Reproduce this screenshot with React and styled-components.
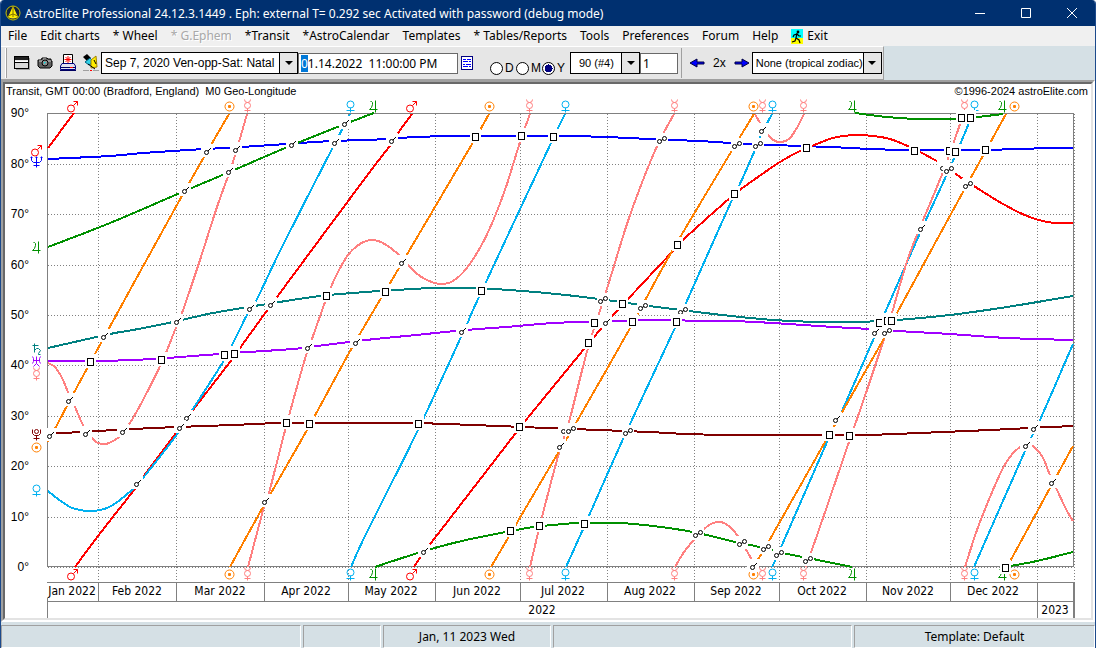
import React, { useEffect, useRef, useState } from 'react'
import styled, { createGlobalStyle, css } from 'styled-components'

const palette = {
  title: '#003070',
  frame: '#1c4a8c',
  menu: '#f0f0f0',
  toolbar: '#e6e6e6',
  panel: '#d5e0e5',
  grid: '#808080',
}

const planets = {
  mars: '#ff0000',
  neptune: '#0000ff',
  jupiter: '#009000',
  saturn: '#008080',
  uranus: '#a000ff',
  pluto: '#800000',
  sun: '#ff8000',
  mercury: '#ff8080',
  venus: '#00b0f0',
}

const uiFont = '"Noto Sans", "Open Sans", sans-serif'
const chartFont = '"DejaVu Sans Condensed", "Noto Sans", sans-serif'
const arial = '"Liberation Sans", Arial, sans-serif'

// every entry is one visible segment of a planet, as x,y pairs
const curves = [
  ['pluto', '48,434 80,432 133,429 177,427 233,425 283,423 366,423 413,423 446,424 499,426 546,428 599,430 649,432 686,434 731,435 823,435 867,435 943,432 990,430 1030,428 1073,426'],
  ['neptune', '48,159 110,156 143,153 187,150 242,147 300,143 333,141 366,140 386,139 416,137 456,136 499,136 566,136 606,137 649,139 699,141 731,143 773,145 830,147 870,149 907,150 977,150 1020,149 1050,148 1073,148'],
  ['uranus', '48,361 100,361 153,359 193,356 233,353 293,349 317,346 366,340 416,335 466,330 506,327 553,323 586,322 619,321 666,320 699,321 731,321 773,323 833,327 870,329 897,331 950,334 1007,338 1073,340'],
  ['saturn', '48,348 110,334 133,330 173,322 213,313 267,304 320,296 366,292 396,290 433,288 473,288 523,291 566,295 606,300 649,306 689,311 731,316 773,320 817,322 857,322 897,320 950,315 1007,307 1073,296'],
  ['jupiter', '48,247 110,223 180,193 227,173 290,146 340,126 366,116 374,113'],
  ['jupiter', '375,567 399,559 431,549 466,540 506,532 533,527 553,525 579,523 619,523 653,526 693,532 731,541 755,546 783,553 813,559 852,567'],
  ['jupiter', '855,113 887,117 917,119 950,119 977,117 1003,114'],
  ['jupiter', '1005,567 1037,561 1073,552'],
  ['mars', '48,148 74,113'],
  ['mars', '75,567 98,536 134,490 143,477 176,433 193,410 230,362 240,348 277,297 366,177 389,147 398,133 412,114'],
  ['mars', '414,567 423,553 431,543 515,434 526,420 584,349 594,337 605,324 628,299 673,251 684,239 731,197 741,189 780,162 802,150 812,146 833,138 855,135 873,136 890,139 910,147 920,152 940,163 960,177 977,188 1003,204 1027,216 1047,222 1063,223 1073,223'],
  ['venus', '48,491 58,499 70,507 80,510 88,511 100,510 113,505 133,489 143,478 178,433 193,409 223,362 235,339 248,313 257,299 283,245 333,147 350,114'],
  ['venus', '351,567 366,534 418,430 461,337 468,322 479,297 551,143 565,114'],
  ['venus', '566,567 584,527 624,437 674,330 686,303 731,202 739,186 755,150 761,135 772,114'],
  ['venus', '772,567 782,545 827,442 842,411 874,338 884,315 920,233 952,163 969,123 973,113'],
  ['venus', '974,567 1025,451 1040,420 1073,344'],
  ['mercury', '48,363 55,367 62,378 68,392 75,407 83,425 92,438 98,443 106,444 113,441 120,436 130,423 143,400 162,362 175,330 182,313 200,260 217,207 233,162 247,114'],
  ['mercury', '248,567 264,507 269,493 287,423 307,352 312,339 325,302 331,287 338,272 348,255 357,246 366,241 374,240 383,243 398,254 416,273 429,281 441,284 453,281 466,269 481,246 493,221 506,187 520,142 530,114'],
  ['mercury', '530,567 542,517 559,453 569,422 588,348 606,292 626,227 643,180 659,142 674,114'],
  ['mercury', '675,567 684,552 693,541 703,530 711,524 719,522 726,524 732,529 737,535 745,548 752,560 755,567'],
  ['mercury', '755,114 760,123 768,135 775,141 782,142 790,138 798,126 804,114'],
  ['mercury', '806,567 823,518 849,442 867,390 883,342 892,313 910,253 943,172 960,124 963,113'],
  ['mercury', '965,567 977,530 990,497 1003,468 1013,453 1022,446 1027,444 1033,446 1042,456 1050,475 1057,490 1067,511 1073,521'],
  ['sun', '48,442 90,363 183,194 229,114'],
  ['sun', '230,567 263,507 307,430 353,346 399,268 472,144 489,114'],
  ['sun', '491,567 558,453 576,423 629,330 671,253 731,152 754,114'],
  ['sun', '753,567 769,541 825,442 882,342 897,313 963,192 1006,114'],
  ['sun', '1007,567 1050,488 1073,446'],
]

const conjunctions = [
  [206, 152], [235, 150], [228, 172], [184, 191], [291, 145], [344, 124], [334, 143], [103, 337],
  [176, 322], [249, 309], [270, 305], [68, 401], [49, 436], [85, 434], [122, 432], [186, 418],
  [179, 428], [136, 484], [264, 502], [307, 348], [355, 343], [391, 141], [401, 263], [461, 332],
  [423, 552], [605, 323], [559, 447], [761, 131], [920, 229], [835, 420], [1033, 429], [1025, 446],
  [1051, 483], [752, 567], [874, 333], [942, 168], [563, 431],
]

const oppositions = [
  [659, 141], [600, 301], [640, 308], [680, 312], [568, 431], [625, 433], [695, 535], [734, 146],
  [755, 146], [946, 171], [965, 186], [884, 333], [739, 544], [763, 549], [776, 555], [805, 561],
]

const squares = [
  [90, 362], [161, 360], [224, 355], [234, 354], [326, 296], [286, 423], [309, 424], [385, 292],
  [418, 424], [481, 291], [475, 137], [521, 136], [553, 137], [519, 427], [588, 343], [594, 323],
  [632, 322], [676, 322], [677, 245], [622, 304], [510, 531], [539, 526], [584, 524], [734, 194],
  [806, 148], [914, 151], [949, 151], [955, 152], [985, 150], [961, 118], [970, 118], [879, 323],
  [887, 321], [891, 321], [827, 435], [829, 435], [849, 436], [1005, 568],
]

const edgeGlyphs = [
  ['mars', 72], ['sun', 229], ['mercury', 247], ['venus', 350], ['jupiter', 373], ['mars', 411],
  ['sun', 489], ['mercury', 529], ['venus', 565], ['mercury', 674], ['sun', 753], ['mercury', 762],
  ['venus', 772], ['mercury', 803], ['jupiter', 852], ['mercury', 964], ['venus', 974],
  ['jupiter', 1002], ['sun', 1014],
]

const sideGlyphs = [
  ['mars', 150], ['neptune', 161], ['jupiter', 247], ['saturn', 349], ['uranus', 361],
  ['mercury', 373], ['pluto', 434], ['sun', 447], ['venus', 490],
]

const glyphPaths = {
  mars: 'M-5 2a3.5 3.5 0 1 0 7 0a3.5 3.5 0 1 0 -7 0M1 -1L5 -5M1 -5H5V-1',
  sun: 'M-4.5 0a4.5 4.5 0 1 0 9 0a4.5 4.5 0 1 0 -9 0M-1 -1H1V1H-1ZM-1 0H1',
  mercury: 'M-3 -6Q-3 -3 0 -3Q3 -3 3 -6M-3 0a3 3 0 1 0 6 0a3 3 0 1 0 -6 0M0 3V7M-3 5H3',
  venus: 'M-3.5 -2a3.5 3.5 0 1 0 7 0a3.5 3.5 0 1 0 -7 0M0 1V6M-4 4H4',
  jupiter: 'M-3 -5H-2L-1 -4V-2L-2 1L-4 3H4M2 -6V6',
  neptune: 'M-5 -5V-1L-3 1H3L5 -1V-5M0 -5V6M-3 4H3M-6 -4H-4M-1 -4H1M4 -4H6',
  saturn: 'M-4 -4H2M-2 -6V3M-2 1L0 -1H2L4 1L2 4V5H4',
  uranus: 'M-4 -5L-3 -3V0L-4 2M4 -5L3 -3V0L4 2M-3 -1H3M0 -5V2M-3 5L0 2L3 5',
  pluto: 'M-4 -5V-1L-2 1H2L4 -1V-5M-2 -3a2 2 0 1 0 4 0a2 2 0 1 0 -4 0M0 1V6M-3 4H3',
}

const months = [
  ['Jan 2022', 72], ['Feb 2022', 137], ['Mar 2022', 220], ['Apr 2022', 306], ['May 2022', 391],
  ['Jun 2022', 477], ['Jul 2022', 563], ['Aug 2022', 650], ['Sep 2022', 736], ['Oct 2022', 822],
  ['Nov 2022', 908], ['Dec 2022', 993],
]

const monthLines = [98, 176, 264, 348, 435, 520, 607, 694, 779, 866, 950, 1037]
const degrees = [90, 80, 70, 60, 50, 40, 30, 20, 10, 0]

const degreeY = deg => Math.round(567 - deg * 5.04)

// Catmull-Rom through all the points, written as cubic beziers
const toPath = text => {
  const p = text.split(' ').map(pair => pair.split(',').map(Number))
  let d = `M${p[0]}`
  for (let i = 0; i < p.length - 1; i++) {
    const a = p[i - 1] || p[i]
    const b = p[i]
    const c = p[i + 1]
    const e = p[i + 2] || c
    d += `C${b[0] + (c[0] - a[0]) / 6},${b[1] + (c[1] - a[1]) / 6} ${c[0] - (e[0] - b[0]) / 6},${c[1] - (e[1] - b[1]) / 6} ${c}`
  }
  return d
}

const GlobalStyle = createGlobalStyle`
  * {
    box-sizing: border-box;
  }

  body {
    margin: 0;
    background: #fff;
    color: #000;
    font-family: ${uiFont};
    font-size: 12px;
  }

  button, input, select {
    font: inherit;
    color: inherit;
    margin: 0;
    padding: 0;
    border: 0;
    border-radius: 0;
    background: none;
  }
`

const Window = styled.div`
  display: flex;
  flex-direction: column;
  min-height: 100vh;
  border: 1px solid ${palette.frame};
  border-top: 0;
  border-radius: 4px 4px 0 0;
  overflow: hidden;
`

const TitleBar = styled.header`
  display: flex;
  align-items: center;
  height: 26px;
  padding-left: 4px;
  gap: 4px;
  background: ${palette.title};
  color: #fff;
`

const Title = styled.h1`
  flex: 1;
  margin: 0;
  font-size: 12px;
  font-weight: normal;
  white-space: nowrap;
`

const WindowButtons = styled.div`
  display: flex;
`

const WindowButton = styled.button`
  display: flex;
  align-items: center;
  justify-content: center;
  width: 46px;
  height: 26px;
`

const MenuBar = styled.nav`
  display: flex;
  align-items: center;
  height: 20px;
  padding-left: 7px;
  gap: 13px;
  background: ${palette.menu};
`

const MenuItem = styled.button`
  display: flex;
  align-items: center;
  gap: 4px;
  line-height: 20px;
  white-space: nowrap;

  ${({ disabled }) => disabled && css`
    color: #a8a8a8;
    text-shadow: 1px 1px #fff;
  `}
`

const ToolbarRow = styled.div`
  display: flex;
  height: 34px;
  background: ${palette.panel};
`

const Toolbar = styled.div`
  display: flex;
  align-items: center;
  height: 34px;
  border-top: 1px solid #fff;
  border-right: 1px solid #a0a0a0;
  border-bottom: 1px solid #a0a0a0;
  padding-right: 1px;
  background: ${palette.toolbar};
`

const Grip = styled.span`
  width: 2px;
  height: 30px;
  margin: 0 6px 0 4px;
  border-left: 1px solid #fff;
  border-right: 1px solid #a0a0a0;
`

const IconGroup = styled.div`
  display: flex;
  align-items: center;
  gap: 5px;
  margin-right: 1px;
`

const IconButton = styled.button`
  display: flex;
  align-items: center;
  justify-content: center;
  width: 18px;
  height: 22px;
`

const Combo = styled.label`
  display: flex;
  width: ${({ $width }) => $width}px;
  height: 22px;
  border: 1px solid #000;
  background: #fff;

  select {
    flex: 1;
    min-width: 0;
    padding-left: ${({ $indent }) => $indent}px;
    appearance: none;
    font-family: ${arial};
    font-size: ${({ $size }) => $size}px;
  }

  select:focus {
    outline: none;
  }
`

const ComboArrow = styled.span`
  display: flex;
  align-items: center;
  justify-content: center;
  width: 18px;
  border-left: 1px solid #000;
  background: ${palette.toolbar};

  &::before {
    content: '';
    border: 4px solid transparent;
    border-top-color: #000;
    border-bottom-width: 0;
  }
`

const TextBox = styled.input`
  width: ${({ $width }) => $width}px;
  height: 21px;
  padding-left: 2px;
  border: 1px solid #696969;
  background: #fff;
  caret-color: #ff8000;

  &:focus {
    outline: none;
  }

  &::selection {
    background: #0078d7;
    color: #fff;
  }
`

const Radios = styled.div`
  display: flex;
  align-self: flex-end;
  height: 22px;
  margin: 0 5px 0 14px;
  font-family: ${arial};
`

const Radio = styled.label`
  display: flex;
  align-items: center;
  width: 26px;
  gap: 2px;

  &:last-child {
    width: 23px;
  }

  input {
    flex: none;
    width: 13px;
    height: 13px;
    border: 1px solid #000;
    border-radius: 50%;
    appearance: none;
    background: #fff;
  }

  input:checked {
    background: radial-gradient(circle, #000080 4px, #fff 4px);
  }
`

const StepGroup = styled.div`
  display: flex;
  align-items: center;
  height: 30px;
  margin-left: 3px;
  padding: 0 1px 0 6px;
  gap: 7px;
  border-left: 1px solid #a0a0a0;
  font-family: ${arial};
`

const ChartFrame = styled.main`
  flex: 1;
  border: 2px solid;
  border-color: #a0a0a0 #fff #fff #a0a0a0;
`

const ChartPanel = styled.section`
  height: 100%;
  border: 2px solid;
  border-color: #696969 #e3e3e3 #e3e3e3 #696969;
  background: #fff;
`

const ChartHeader = styled.div`
  display: flex;
  justify-content: space-between;
  height: 14px;
  padding: 0 3px 0 1px;
  font-family: ${arial};
  font-size: 11px;
  line-height: 14px;
  white-space: pre;
`

const ChartSvg = styled.svg`
  display: block;
  width: 100%;
  height: auto;
  font-family: ${chartFont};
  font-size: 12px;
`

const StatusBar = styled.footer`
  display: grid;
  grid-template-columns: 300fr 78fr 168fr 299fr 241fr;
  gap: 2px;
  height: 26px;
  padding: 3px 0 1px;
  background: ${palette.panel};
`

const StatusCell = styled.div`
  border: 1px solid;
  border-color: #a0a0a0 #fff #fff #a0a0a0;
  line-height: 21px;
  text-align: center;
`

const Combobox = ({ label, value, width, size = 11, indent = 3 }) => (
  <Combo $width={width} $size={size} $indent={indent}>
    <select aria-label={label} defaultValue={value}>
      <option>{value}</option>
    </select>
    <ComboArrow />
  </Combo>
)

const Glyph = ({ name, x, y }) => (
  <path
    d={glyphPaths[name]}
    transform={`translate(${x + 0.5} ${y + 0.5})`}
    fill='none'
    stroke={planets[name]}
  />
)

const Conjunction = ({ x, y }) => (
  <g>
    <rect x={x - 5} y={y - 8} width='12' height='13' fill='#fff' />
    <circle cx={x + 0.5} cy={y + 0.5} r='2' fill='none' stroke='#000' />
    <path d={`M${x + 2} ${y - 1}L${x + 5} ${y - 4}`} stroke='#000' />
  </g>
)

const Opposition = ({ x, y }) => (
  <g>
    <rect x={x - 3} y={y - 8} width='12' height='13' fill='#fff' />
    <g fill='none' stroke='#000'>
      <circle cx={x + 0.5} cy={y + 0.5} r='2' />
      <circle cx={x + 5.5} cy={y - 2.5} r='2' />
      <path d={`M${x + 2} ${y - 0.5}L${x + 4} ${y - 1.5}`} />
    </g>
  </g>
)

const Square = ({ x, y }) => (
  <g>
    <rect x={x - 5} y={y - 8} width='11' height='14' fill='#fff' />
    <rect x={x - 2.5} y={y - 3.5} width='6' height='7' fill='#fff' stroke='#000' shapeRendering='crispEdges' />
  </g>
)

const Chart = () => (
  <ChartSvg viewBox='5 98 1086 520' role='img' aria-label='Transit graph'>
    <g stroke={palette.grid} strokeDasharray='1 2' shapeRendering='crispEdges'>
      {degrees.slice(1).map(deg => (
        <path key={deg} d={`M48 ${degreeY(deg) + 0.5}H1073`} />
      ))}
      {monthLines.map(x => (
        <path key={x} d={`M${x + 0.5} 114V582`} />
      ))}
      <path d='M1074.5 114V582' />
    </g>

    <g fill='none' stroke={palette.grid} shapeRendering='crispEdges'>
      <path d='M47.5 566.5V113.5H1073.5V566.5Z' />
      <path d='M47 582.5H1074M47 601.5H1074M47.5 598V618' />
      <path d='M1074 582V618' strokeWidth='2' />
      {monthLines.map(x => (
        <path key={x} d={`M${x + 0.5} 582V${x === 1037 ? 618 : 601}`} />
      ))}
    </g>

    <g fill='none' strokeWidth='2' shapeRendering='crispEdges'>
      {curves.map(([name, points], i) => (
        <path key={i} d={toPath(points)} stroke={planets[name]} />
      ))}
    </g>

    {edgeGlyphs.map(([name, x], i) => (
      <g key={i}>
        <Glyph name={name} x={x} y={name === 'mercury' ? 105 : 106} />
        <Glyph name={name} x={x} y={name === 'mercury' ? 573 : 574} />
      </g>
    ))}
    {sideGlyphs.map(([name, y]) => (
      <Glyph key={name} name={name} x={36} y={y} />
    ))}

    {conjunctions.map(([x, y]) => <Conjunction key={`${x}-${y}`} x={x} y={y} />)}
    {oppositions.map(([x, y]) => <Opposition key={`${x}-${y}`} x={x} y={y} />)}
    {squares.map(([x, y]) => <Square key={`${x}-${y}`} x={x} y={y} />)}

    <g fontFamily={arial}>
      {degrees.map(deg => (
        <text key={deg} x='29' y={degreeY(deg) + 4} textAnchor='end'>{deg}°</text>
      ))}
    </g>
    {months.map(([label, x]) => (
      <text key={label} x={x} y='595' textAnchor='middle'>{label}</text>
    ))}
    <text x='542' y='614' textAnchor='middle'>2022</text>
    <text x='1055' y='614' textAnchor='middle'>2023</text>
  </ChartSvg>
)

const LogoIcon = () => (
  <svg width='16' height='16' viewBox='0 0 16 16'>
    <circle cx='8' cy='8' r='7' fill='#102040' stroke='#c8c000' />
    <path d='M8 1L13 12Q8 15 3 12Z' fill='#ffee00' />
    <path d='M8 2V12M3 11L8 9L13 11' fill='none' stroke='#807000' />
  </svg>
)

const SplitIcon = () => (
  <svg width='16' height='16' viewBox='0 0 16 16' shapeRendering='crispEdges'>
    <path d='M2 14.5H15.5V3' fill='none' stroke='#a0a0a0' />
    <rect x='0' y='1' width='15' height='13' fill='#000' />
    <rect x='1' y='2' width='13' height='4' fill='#e6e6e6' />
    <rect x='1' y='6' width='13' height='1' fill='#fff' />
    <rect x='1' y='2' width='13' height='3' fill='#202020' />
    <rect x='1' y='8' width='13' height='5' fill='#d8d8d8' />
  </svg>
)

const CameraIcon = () => (
  <svg width='16' height='16' viewBox='0 0 16 16'>
    <path d='M1 5H4L5 3H10L11 4H14V6H15V11L13 13H3L1 11Z' fill='#606060' stroke='#000' />
    <path d='M2 6H14M6 4H9' stroke='#d0d0d0' />
    <circle cx='8' cy='8' r='3' fill='#909090' stroke='#000' />
    <path d='M7 7L9 7L7 9Z' fill='#00e0e0' />
  </svg>
)

const PrintIcon = () => (
  <svg width='18' height='18' viewBox='0 0 18 18'>
    <path d='M4.5 0.5H13.5V10H4.5Z' fill='#fff' stroke='#000' />
    <path d='M9 2V9M5.5 5.5H12.5M6.5 3L11.5 8M11.5 3L6.5 8' stroke='#f00' />
    <path d='M3 9.5L1.5 12V15.5H16.5V12L15 9.5Z' fill='#e0e0f0' stroke='#000080' />
    <path d='M1 16.5H17M2 13.5H16' stroke='#000060' />
    <path d='M11 13.5H14' stroke='#f00' />
  </svg>
)

const LampIcon = () => (
  <svg width='18' height='18' viewBox='0 0 18 18'>
    <path d='M1 3L5 0L9 4L5 7Z' fill='#000' />
    <path d='M3 8L8 4L12 8L7 11Z' fill='#30d0e8' stroke='#006080' />
    <path d='M9 6L14 2L15 13L9 14Z' fill='#ffee00' stroke='#a08000' />
    <path d='M6 10L13 15M12 6L14 10' stroke='#000' />
    <path d='M1 16.5H7M11 16.5H17' stroke='#a0a0a0' />
    <path d='M8 16.5H10' stroke='#f00' />
  </svg>
)

const NotesIcon = () => (
  <svg width='12' height='14' viewBox='0 0 12 14' shapeRendering='crispEdges'>
    <rect x='0.5' y='0.5' width='11' height='13' fill='#fff' stroke='#000080' />
    <path d='M2 3.5H5M6 3.5H10M2 5.5H7M8 5.5H10M2 8.5H4M5 8.5H10M2 10.5H7M8 10.5H10' stroke='#0000ff' />
  </svg>
)

const ArrowIcon = ({ back }) => (
  <svg width='16' height='12' viewBox='0 0 16 12'>
    <path
      d={back ? 'M15 5H8V2L1 6L8 10V7H15Z' : 'M1 5H8V2L15 6L8 10V7H1Z'}
      fill='#0000ff'
      stroke='#000040'
    />
  </svg>
)

const ExitIcon = () => (
  <svg width='12' height='15' viewBox='0 0 12 15'>
    <rect width='12' height='9' fill='#00ffff' />
    <rect y='9' width='12' height='6' fill='#ffff00' />
    <circle cx='7' cy='3' r='1.4' />
    <path d='M6 4L5 9L8 11L9 14M5 9L4 12L1 13M6 5L3 6L2 8M6 5L8 7H10' fill='none' stroke='#000' strokeWidth='1.2' />
  </svg>
)

const menuItems = [
  'File', 'Edit charts', '* Wheel', '* G.Ephem', '*Transit', '*AstroCalendar', 'Templates',
  '* Tables/Reports', 'Tools', 'Preferences', 'Forum', 'Help',
]

const toolIcons = [
  ['Split view', SplitIcon],
  ['Snapshot', CameraIcon],
  ['Print', PrintIcon],
  ['Highlight', LampIcon],
]

const App = () => {
  const dateRef = useRef(null)
  const [date, setDate] = useState('01.14.2022  11:00:00 PM')
  const [unit, setUnit] = useState('Y')

  // start with the month part of the date ready for typing
  useEffect(() => {
    dateRef.current.focus()
    dateRef.current.setSelectionRange(0, 1)
  }, [])

  return (
    <Window>
      <GlobalStyle />
      <TitleBar>
        <LogoIcon />
        <Title>
          AstroElite Professional 24.12.3.1449 . Eph: external T= 0.292 sec Activated with password (debug mode)
        </Title>
        <WindowButtons>
          <WindowButton aria-label='Minimize'>
            <svg width='10' height='10'><path d='M0 5.5H10' stroke='#fff' /></svg>
          </WindowButton>
          <WindowButton aria-label='Maximize'>
            <svg width='10' height='10'><path d='M0.5 0.5H9.5V9.5H0.5Z' fill='none' stroke='#fff' /></svg>
          </WindowButton>
          <WindowButton aria-label='Close'>
            <svg width='10' height='10'><path d='M0 0L10 10M10 0L0 10' stroke='#fff' /></svg>
          </WindowButton>
        </WindowButtons>
      </TitleBar>

      <MenuBar>
        {menuItems.map(item => (
          <MenuItem key={item} disabled={item === '* G.Ephem'}>{item}</MenuItem>
        ))}
        <MenuItem><ExitIcon />Exit</MenuItem>
      </MenuBar>

      <ToolbarRow>
        <Toolbar>
          <Grip />
          <IconGroup>
            {toolIcons.map(([label, Icon]) => (
              <IconButton key={label} aria-label={label}><Icon /></IconButton>
            ))}
          </IconGroup>
          <Combobox label='Chart' value='Sep 7, 2020 Ven-opp-Sat: Natal' width={197} size={12} />
          <TextBox
            ref={dateRef}
            $width={160}
            aria-label='Date and time'
            value={date}
            onChange={event => setDate(event.target.value)}
          />
          <IconButton aria-label='Notes'><NotesIcon /></IconButton>
          <Radios>
            {['D', 'M', 'Y'].map(name => (
              <Radio key={name}>
                <input
                  type='radio'
                  name='unit'
                  checked={unit === name}
                  onChange={() => setUnit(name)}
                />
                {name}
              </Radio>
            ))}
          </Radios>
          <Combobox label='Harmonic' value='90 (#4)' width={70} indent={8} />
          <TextBox $width={38} aria-label='Step' defaultValue='1' />
          <StepGroup>
            <IconButton aria-label='Back'><ArrowIcon back /></IconButton>
            <span>2x</span>
            <IconButton aria-label='Forward'><ArrowIcon /></IconButton>
          </StepGroup>
          <Combobox label='Zodiac' value='None (tropical zodiac)' width={130} />
        </Toolbar>
      </ToolbarRow>

      <ChartFrame>
        <ChartPanel>
          <ChartHeader>
            <span>{'Transit, GMT 00:00 (Bradford, England)  M0 Geo-Longitude'}</span>
            <span>©1996-2024 astroElite.com</span>
          </ChartHeader>
          <Chart />
        </ChartPanel>
      </ChartFrame>

      <StatusBar>
        <StatusCell />
        <StatusCell />
        <StatusCell>Jan, 11 2023 Wed</StatusCell>
        <StatusCell />
        <StatusCell>Template: Default</StatusCell>
      </StatusBar>
    </Window>
  )
}

export default App
